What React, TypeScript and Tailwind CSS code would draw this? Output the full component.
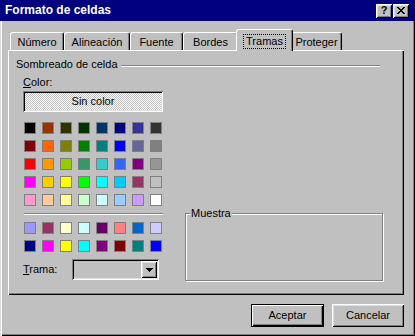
import { type ReactNode } from "react";

const paletteTop = [
  ["#000000", "#993300", "#333300", "#003300", "#003366", "#000080", "#333399", "#333333"],
  ["#800000", "#ff6600", "#808000", "#008000", "#008080", "#0000ff", "#666699", "#808080"],
  ["#ff0000", "#ff9900", "#99cc00", "#339966", "#33cccc", "#3366ff", "#800080", "#969696"],
  ["#ff00ff", "#ffcc00", "#ffff00", "#00ff00", "#00ffff", "#00ccff", "#993366", "#c0c0c0"],
  ["#ff99cc", "#ffcc99", "#ffff99", "#ccffcc", "#ccffff", "#99ccff", "#cc99ff", "#ffffff"],
];

const paletteChart = [
  ["#9999ff", "#993366", "#ffffcc", "#ccffff", "#660066", "#ff8080", "#0066cc", "#ccccff"],
  ["#000080", "#ff00ff", "#ffff00", "#00ffff", "#800080", "#800000", "#008080", "#0000ff"],
];

type Tab = { label: string; width: string; selected?: boolean };

const tabs: Tab[] = [
  { label: "Número", width: "w-[54px]" },
  { label: "Alineación", width: "w-[66px]" },
  { label: "Fuente", width: "w-[53px]" },
  { label: "Bordes", width: "w-[55px]" },
  { label: "Tramas", width: "w-[57px]", selected: true },
  { label: "Proteger", width: "w-[51px]" },
];

const raised =
  "shadow-[inset_1px_1px_#fff,inset_-1px_-1px_#000,inset_2px_2px_#dfdfdf,inset_-2px_-2px_#808080]";

function Swatches({ rows }: { rows: string[][] }) {
  return (
    <div className="ml-[1px] grid w-fit grid-cols-8 gap-[6px]">
      {rows.flat().map((c, i) => (
        <div
          key={i}
          className="h-[12px] w-[12px] border border-[#808080]"
          style={{ backgroundColor: c }}
        />
      ))}
    </div>
  );
}

function Etched() {
  return <div className="h-[2px] border-t border-b border-t-[#808080] border-b-white" />;
}

function Button({ children, isDefault }: { children: ReactNode; isDefault?: boolean }) {
  return (
    <div
      className={
        isDefault
          ? "flex h-[23px] w-[73px] items-center justify-center border border-black shadow-[inset_1px_1px_#fff,inset_-1px_-1px_#000,inset_-2px_-2px_#808080]"
          : `flex h-[23px] w-[72px] items-center justify-center ${raised}`
      }
    >
      {children}
    </div>
  );
}

export default function App() {
  return (
    <div className="flex h-[336px] w-[415px] flex-col overflow-hidden bg-[#c0c0c0] font-['Liberation_Sans',Arial,sans-serif] text-[11px] leading-[13px] text-black shadow-[inset_1px_0_#dfdfdf,inset_2px_0_#fff,inset_-1px_-1px_#000,inset_-2px_-2px_#808080]">
      {/* title bar */}
      <div className="flex h-[21px] items-center justify-between bg-[#000080] pl-[5px] pr-[6px]">
        <span className="text-[12px] font-bold text-white">Formato de celdas</span>
        <div className="flex gap-[1px]">
          <div className={`flex h-[14px] w-[16px] items-center justify-center bg-[#c0c0c0] text-[11px] font-bold leading-none ${raised}`}>
            ?
          </div>
          <div className={`flex h-[14px] w-[16px] items-center justify-center bg-[#c0c0c0] ${raised}`}>
            <svg width="8" height="7" viewBox="0 0 8 7" shapeRendering="crispEdges">
              <path
                d="M0 0h2v1h-2zM6 0h2v1h-2zM1 1h2v1h-2zM5 1h2v1h-2zM2 2h4v1h-4zM3 3h2v1h-2zM2 4h4v1h-4zM1 5h2v1h-2zM5 5h2v1h-2zM0 6h2v1h-2zM6 6h2v1h-2z"
                fill="#000"
              />
            </svg>
          </div>
        </div>
      </div>

      {/* tabs */}
      <div className="flex h-[21px] items-end pl-[10px] mt-[8px]">
        {tabs.map((t) =>
          t.selected ? (
            <div
              key={t.label}
              className={`relative z-10 -mx-[2px] mb-[-1px] flex h-[22px] ${t.width} justify-center rounded-t-[3px] border-t border-l border-r border-white border-r-black bg-[#c0c0c0] pt-[4px] shadow-[inset_-1px_0_#808080]`}
            >
              <span className="h-fit border border-dotted border-black px-[2px]">{t.label}</span>
            </div>
          ) : (
            <div
              key={t.label}
              className={`h-[18px] ${t.width} rounded-t-[3px] border-t border-l border-r border-white border-r-black pt-[3px] text-center shadow-[inset_-1px_0_#808080]`}
            >
              {t.label}
            </div>
          ),
        )}
      </div>

      {/* panel */}
      <div className="ml-[8px] h-[245px] w-[396px] shadow-[inset_1px_1px_#fff,inset_-1px_-1px_#000,inset_-2px_-2px_#808080]">
        <div className="flex items-center pl-[8px] pr-[24px] pt-[8px]">
          <span>Sombreado de celda</span>
          <div className="ml-[3px] mt-[3px] flex-1">
            <Etched />
          </div>
        </div>

        <div className="flex pl-[15px]">
          <div className="flex w-[141px] flex-col">
            <div className="mt-[5px]">
              <span className="underline">C</span>olor:
            </div>
            <div className="mt-[2px] flex h-[21px] w-[140px] items-center justify-center bg-[repeating-conic-gradient(#fff_0_25%,#c0c0c0_0_50%)] bg-[length:2px_2px] shadow-[inset_1px_1px_#808080,inset_-1px_-1px_#fff,inset_2px_2px_#000,inset_-2px_-2px_#dfdfdf]">
              Sin color
            </div>
            <div className="mt-[10px]">
              <Swatches rows={paletteTop} />
            </div>
            <div className="ml-[1px] mt-[7px] w-[139px]">
              <Etched />
            </div>
            <div className="mt-[7px]">
              <Swatches rows={paletteChart} />
            </div>
            <div className="mt-[7px] flex items-center">
              <span className="w-[49px]">
                <span className="underline">T</span>rama:
              </span>
              <div className="flex h-[21px] w-[87px] justify-end p-[2px] shadow-[inset_1px_1px_#808080,inset_-1px_-1px_#fff,inset_2px_2px_#000,inset_-2px_-2px_#dfdfdf]">
                <div className={`flex h-[17px] w-[16px] items-center justify-center ${raised}`}>
                  <svg width="7" height="4" viewBox="0 0 7 4" shapeRendering="crispEdges">
                    <path d="M0 0h7v1h-1v1h-1v1h-1v1h-1v-1h-1v-1h-1v-1h-1z" fill="#000" />
                  </svg>
                </div>
              </div>
            </div>
          </div>

          <div className="ml-[21px] flex flex-col justify-end">
            <div className="relative mb-[-1px] h-[68px] w-[198px] border border-[#808080] shadow-[inset_1px_1px_#fff,1px_1px_#fff]">
              <span className="absolute -top-[7px] left-[4px] bg-[#c0c0c0] px-[1px]">Muestra</span>
            </div>
          </div>
        </div>
      </div>

      {/* buttons */}
      <div className="mt-[9px] flex justify-end gap-[8px] pr-[11px]">
        <Button isDefault>Aceptar</Button>
        <Button>Cancelar</Button>
      </div>
    </div>
  );
}
